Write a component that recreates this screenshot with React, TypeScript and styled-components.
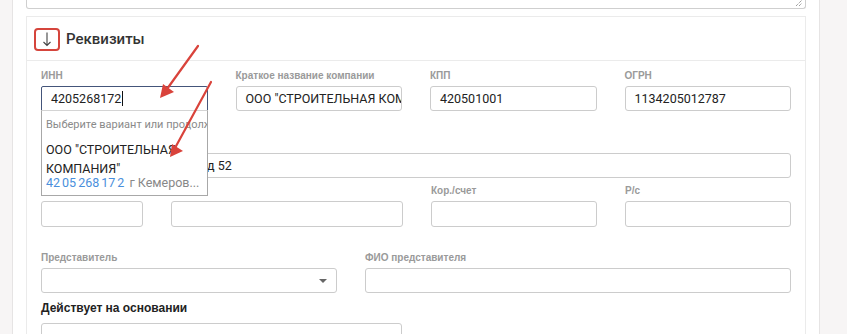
import React from 'react';
import styled, { createGlobalStyle } from 'styled-components';

const GlobalStyle = createGlobalStyle`
  html, body {
    margin: 0;
    padding: 0;
    background: #fff;
    font-family: Roboto, "Liberation Sans", Arial, sans-serif;
    overflow: hidden;
  }
`;

const Page = styled.div`
  display: flex;
  width: 847px;
  height: 334px;
  position: relative;
  overflow: hidden;
`;

const SideStrip = styled.div<{ $width: number; $border?: 'left' | 'right' }>`
  flex: 0 0 ${p => p.$width}px;
  background: #f7f5f5;
  border-${p => p.$border ?? 'right'}: 1px solid #e6e4e4;
`;

const Main = styled.div`
  flex: 1;
  padding-left: 13px;
  padding-right: 13px;
  background: #fff;
`;

const TextareaTail = styled.div`
  width: 780px;
  height: 9px;
  box-sizing: border-box;
  border: 1px solid #cfcfcf;
  border-top: none;
  border-radius: 0 0 3px 3px;
  margin-bottom: 7px;
  position: relative;
`;

const ResizeGrip = styled.svg`
  position: absolute;
  right: 2px;
  bottom: 1px;
`;

const Card = styled.section`
  width: 780px;
  box-sizing: border-box;
  border: 1px solid #ebebeb;
  border-bottom: none;
`;

const CardHeader = styled.div`
  height: 44px;
  box-sizing: border-box;
  border-bottom: 1px solid #ebebeb;
  display: flex;
  align-items: center;
  padding-left: 7px;
  gap: 6px;
`;

const ToggleBox = styled.div`
  width: 26px;
  height: 23px;
  box-sizing: border-box;
  border: 2.5px solid #d5453c;
  border-radius: 4px;
  display: flex;
  align-items: center;
  justify-content: center;
  margin-top: 1px;
`;

const Title = styled.h2`
  margin: 0;
  font-size: 15px;
  font-weight: 500;
  color: #333;
`;

const Body = styled.div`
  padding: 9px 14px 0 14px;
`;

const Row = styled.div<{ $cols: string; $mt?: number }>`
  display: grid;
  grid-template-columns: ${p => p.$cols};
  column-gap: 28px;
  margin-top: ${p => p.$mt ?? 0}px;
`;

const Field = styled.div`
  position: relative;
  min-width: 0;
`;

const Label = styled.div`
  font-family: "Liberation Sans", Arial, sans-serif;
  font-size: 10px;
  font-weight: 700;
  line-height: 12px;
  height: 12px;
  color: #9a9a9a;
  margin-bottom: 4px;
  white-space: nowrap;
`;

const Input = styled.div<{ $focused?: boolean; $h?: number }>`
  height: ${p => p.$h ?? 25}px;
  box-sizing: border-box;
  border: 1px solid ${p => (p.$focused ? '#44557a' : '#cccccc')};
  border-radius: ${p => (p.$focused ? '2px 2px 0 0' : '3px')};
  padding: 0 9px;
  display: flex;
  align-items: center;
  font-size: 12.5px;
  color: #222;
  white-space: nowrap;
  overflow: hidden;
  background: #fff;
`;

const Caret = styled.span`
  width: 1px;
  height: 15px;
  background: #111;
  margin-left: 1px;
`;

const SelectInput = styled(Input)`
  justify-content: flex-end;
  padding-right: 9px;
`;

const SelectArrow = styled.span`
  width: 0;
  height: 0;
  border-left: 4px solid transparent;
  border-right: 4px solid transparent;
  border-top: 4px solid #666;
`;

const SectionTitle = styled.div`
  font-family: "Liberation Sans", Arial, sans-serif;
  font-size: 12px;
  font-weight: 700;
  color: #222;
  line-height: 15px;
  margin: 8px 0 7px;
`;

const Suggest = styled.div`
  position: absolute;
  left: 0;
  right: 0;
  top: 40px;
  height: 86px;
  box-sizing: border-box;
  border: 1px solid #a8a8a8;
  border-top-color: #d4d4d4;
  background: #fff;
  z-index: 5;
  padding: 0 0 0 4px;
  overflow: hidden;
`;

const SuggestHint = styled.div`
  font-size: 11px;
  color: #8a8a8a;
  white-space: nowrap;
  line-height: 13px;
  margin-top: 7px;
`;

const SuggestName = styled.div`
  font-size: 12.5px;
  color: #222;
  line-height: 19px;
  margin-top: 9px;
`;

const SuggestMeta = styled.div`
  font-size: 12.5px;
  color: #888;
  line-height: 16px;
  margin-top: -3px;
  white-space: nowrap;
`;

const Hit = styled.span`
  color: #4a8fdc;
  margin-right: 2px;
`;

const Overlay = styled.svg`
  position: absolute;
  left: 0;
  top: 0;
  pointer-events: none;
  z-index: 10;
`;

export default function App() {
  return (
    <>
      <GlobalStyle />
      <Page>
        <SideStrip $width={12} />
        <Main>
          <TextareaTail>
            <ResizeGrip width="8" height="8" viewBox="0 0 8 8">
              <path d="M1 7 L7 1 M4 7 L7 4" stroke="#777" strokeWidth="1" strokeDasharray="1 1" />
            </ResizeGrip>
          </TextareaTail>
          <Card>
            <CardHeader>
              <ToggleBox>
                <svg width="10" height="16" viewBox="0 0 10 16">
                  <path d="M5 1.5 V14.5 M1.5 11 L5 14.5 L8.5 11" fill="none" stroke="#444" strokeWidth="1.1" />
                </svg>
              </ToggleBox>
              <Title>Реквизиты</Title>
            </CardHeader>
            <Body>
              <Row $cols="1fr 1fr 1fr 1fr">
                <Field>
                  <Label>ИНН</Label>
                  <Input $focused>
                    4205268172
                    <Caret />
                  </Input>
                  <Suggest>
                    <SuggestHint>Выберите вариант или продолжите ввод</SuggestHint>
                    <SuggestName>
                      ООО "СТРОИТЕЛЬНАЯ
                      <br />
                      КОМПАНИЯ"
                    </SuggestName>
                    <SuggestMeta>
                      <Hit>42</Hit>
                      <Hit>05</Hit>
                      <Hit>268</Hit>
                      <Hit>17</Hit>
                      <Hit>2</Hit>
                      {'  '}г Кемеров...
                    </SuggestMeta>
                  </Suggest>
                </Field>
                <Field>
                  <Label>Краткое название компании</Label>
                  <Input>ООО "СТРОИТЕЛЬНАЯ КОМПАНИЯ"</Input>
                </Field>
                <Field>
                  <Label>КПП</Label>
                  <Input>420501001</Input>
                </Field>
                <Field>
                  <Label>ОГРН</Label>
                  <Input>1134205012787</Input>
                </Field>
              </Row>

              <Row $cols="1fr" $mt={26}>
                <Field>
                  <Label>Юридический адрес</Label>
                  <Input>г Кемерово, ул Кузнецкая, д 52</Input>
                </Field>
              </Row>

              <Row $cols="102px 232px 1fr 1fr" $mt={7}>
                <Field>
                  <Label>БИК</Label>
                  <Input $h={26} />
                </Field>
                <Field>
                  <Label>Банк</Label>
                  <Input $h={26} />
                </Field>
                <Field>
                  <Label>Кор./счет</Label>
                  <Input $h={26} />
                </Field>
                <Field>
                  <Label>Р/с</Label>
                  <Input $h={26} />
                </Field>
              </Row>

              <Row $cols="296px 1fr" $mt={25}>
                <Field>
                  <Label>Представитель</Label>
                  <SelectInput>
                    <SelectArrow />
                  </SelectInput>
                </Field>
                <Field>
                  <Label>ФИО представителя</Label>
                  <Input />
                </Field>
              </Row>

              <SectionTitle>Действует на основании</SectionTitle>
              <Row $cols="361px 1fr">
                <Field>
                  <Input />
                </Field>
              </Row>
            </Body>
          </Card>
        </Main>
        <SideStrip $width={27} $border="left" />

        <Overlay width="847" height="334" viewBox="0 0 847 334">
          <g stroke="#d9433b" strokeWidth="2.2" strokeLinecap="round" fill="#d9433b">
            <line x1="198" y1="46" x2="167" y2="89" />
            <polygon points="160,98 174,92 163,84" stroke="none" />
            <line x1="211" y1="82" x2="175" y2="148" />
            <polygon points="170,157 183,151 172,144" stroke="none" />
          </g>
        </Overlay>
      </Page>
    </>
  );
}
